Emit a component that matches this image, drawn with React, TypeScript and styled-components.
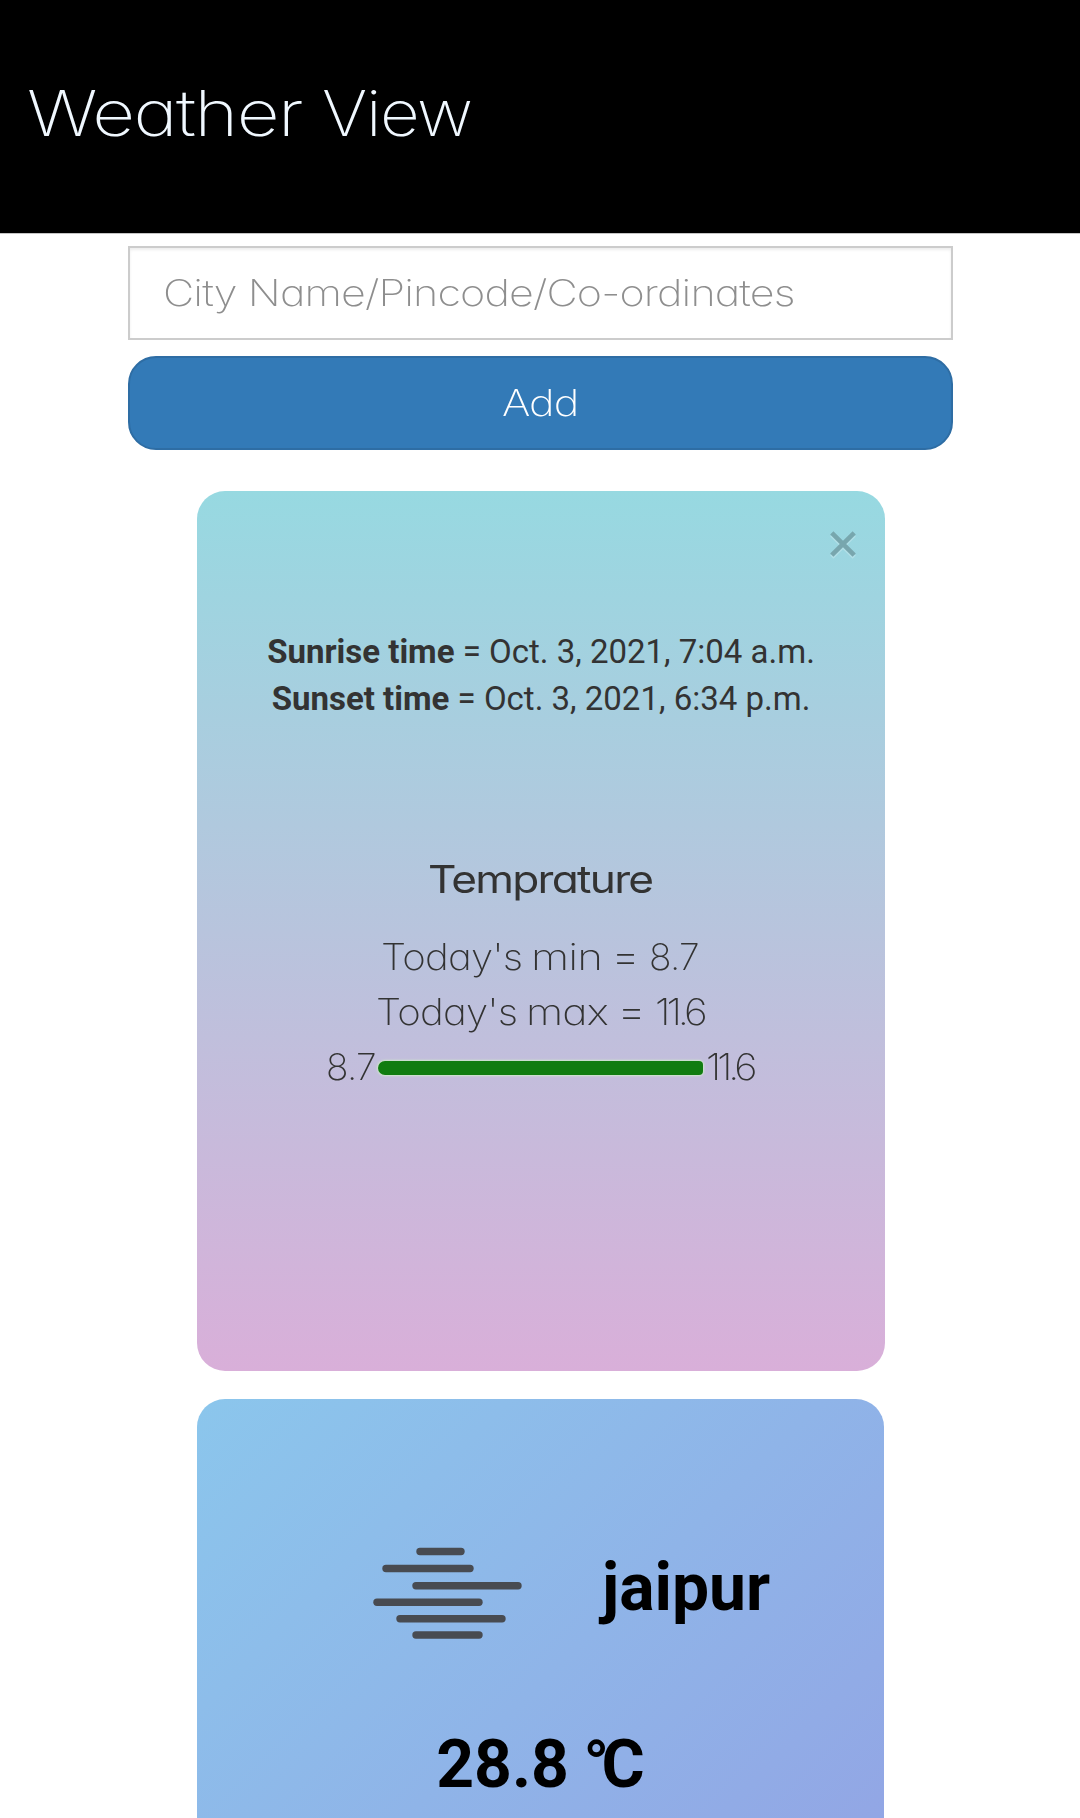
import React, { useLayoutEffect, useRef, useState } from 'react';
import styled, { createGlobalStyle } from 'styled-components';

const GlobalStyle = createGlobalStyle`
  * { box-sizing: border-box; }
  html, body { margin: 0; background: #fff; }
  body { font-family: Roboto, sans-serif; color: #333; overflow: hidden; }
`;

const Page = styled.div`
  display: flex;
  flex-direction: column;
  align-items: center;
  width: 1080px;
  height: 1818px;
  overflow: hidden;
  background: #fff;
`;

const Header = styled.header`
  flex: none;
  width: 100%;
  height: 234px;
  padding: 73px 0 0 27px;
  background: #000;
  border-bottom: 1px solid #c4c4c4;
`;

const WordBox = styled.span<{ $width: number }>`
  display: block;
  flex: none;
  width: ${p => p.$width}px;
  text-align: left;
  white-space: pre;
`;

const WordText = styled.span<{ $size: number; $weight: number; $track: number }>`
  display: inline-block;
  transform-origin: 0 50%;
  font-family: Inter, Roboto, sans-serif;
  font-feature-settings: 'cv11';
  font-size: ${p => p.$size}px;
  font-weight: ${p => p.$weight};
  letter-spacing: ${p => p.$track}em;
`;

type WordProps = { width: number; size?: number; weight?: number; track?: number; children: string };

/* A word set wide: its letters are stretched to fill the given width. */
function Word({ width, size = 36.5, weight = 200, track = -0.02, children }: WordProps) {
  const ref = useRef<HTMLSpanElement>(null);
  const [scale, setScale] = useState(1);
  useLayoutEffect(() => {
    if (ref.current) setScale(width / ref.current.offsetWidth);
  }, [width, size, weight, track, children]);
  return (
    <WordBox $width={width}>
      <WordText ref={ref} $size={size} $weight={weight} $track={track} style={{ transform: `scaleX(${scale})` }}>
        {children}
      </WordText>
    </WordBox>
  );
}

const Title = styled.h1`
  display: flex;
  gap: 20px;
  margin: 0;
  line-height: 80px;
  font-weight: 200;
  color: aliceblue;
`;

const Form = styled.form`
  flex: none;
  display: flex;
  flex-direction: column;
  gap: 16px;
  width: 825px;
  margin: 12px 0 41px 1px;
`;

const Field = styled.label`
  display: block;
  width: 100%;
  height: 94px;
  padding: 0 33px;
  border: 2px solid #ccc;
  overflow: hidden;
  box-shadow: inset 0 2px 3px rgba(0, 0, 0, 0.075);
  background: #fff;
`;

const CityInput = styled.input`
  display: block;
  width: 620px;
  height: 90px;
  padding: 0;
  border: 0;
  outline: none;
  background: transparent;
  transform: scaleX(1.18);
  transform-origin: 0 50%;
  font-family: Inter, Roboto, sans-serif;
  font-feature-settings: 'cv11';
  font-size: 36.5px;
  font-weight: 200;
  letter-spacing: -0.75px;
  &::placeholder { color: #8e8e8e; opacity: 1; }
`;

const AddButton = styled.button`
  display: flex;
  align-items: center;
  justify-content: center;
  width: 100%;
  height: 94px;
  padding: 0;
  border: 2px solid #2e6da4;
  border-radius: 28px;
  background: #337ab7;
  color: #fff;
`;

const Card = styled.section<{ $bg: string; $width: number }>`
  flex: none;
  align-self: flex-start;
  display: flex;
  flex-direction: column;
  align-items: center;
  width: ${p => p.$width}px;
  height: 880px;
  margin: 0 0 28px 197px;
  border-radius: 28px;
  background: ${p => p.$bg};
`;

const CloseButton = styled.button`
  align-self: flex-end;
  width: 26px;
  height: 26px;
  margin: 40px 29px 0 0;
  padding: 0;
  border: 0;
  background: none;
  opacity: 0.22;
  svg { display: block; overflow: visible; filter: drop-shadow(0 2px 0 #fff); }
`;

const SunTimes = styled.div`
  margin-top: 71px;
  font-size: 33px;
  line-height: 47px;
  text-align: center;
  white-space: nowrap;
`;

const Heading = styled.h3`
  margin: 130px 2px 0 0;
  height: 55px;
  line-height: 55px;
`;

const Readings = styled.div`
  margin-top: 23px;
  padding-right: 3px;
`;

const Reading = styled.div<{ $gap: number }>`
  display: flex;
  align-items: center;
  justify-content: center;
  gap: ${p => p.$gap}px;
  height: 55px;
  line-height: 55px;
  ${WordBox} { margin-top: 6px; }
`;

const Bar = styled.div`
  flex: none;
  width: 325px;
  height: 14px;
  border-radius: 7px 4px 4px 7px;
  background: #107c10;
  box-shadow: 0 0 2px 1px #cfe8cb;
`;

const CityRow = styled.div`
  display: flex;
  align-items: center;
  width: 100%;
  height: 100px;
  margin-top: 144px;
  padding-left: 176px;
`;

const CityName = styled.h2`
  margin: -10px 0 0 80px;
  color: #000;
  font-size: 66px;
  font-weight: 700;
  line-height: 72px;
`;

const Degrees = styled.div`
  margin-top: 84px;
  color: #000;
  font-size: 66px;
  font-weight: 700;
  line-height: 76px;
  white-space: pre;
  word-spacing: -2px;
`;

const Ring = styled.span`
  letter-spacing: -7.5px;
`;

const Haze = () => (
  <svg width="149" height="93" viewBox="0 0 149 93" stroke="#484b51" strokeWidth="7.4" strokeLinecap="round">
    {[
      [47, 88, 4.5],
      [13, 97, 21.5],
      [43, 145, 38.7],
      [4, 106, 55.3],
      [27, 129, 71.7],
      [43, 106, 88],
    ].map(([x1, x2, y]) => (
      <path key={y} d={`M${x1} ${y}H${x2}`} />
    ))}
  </svg>
);

export default function App() {
  return (
    <>
      <GlobalStyle />
      <Page>
        <Header>
          <Title>
            <Word width={275} size={63}>Weather</Word>
            <Word width={150} size={63}>View</Word>
          </Title>
        </Header>
        <Form onSubmit={e => e.preventDefault()}>
          <Field>
            <CityInput placeholder="City Name/Pincode/Co-ordinates" />
          </Field>
          <AddButton><Word width={77}>Add</Word></AddButton>
        </Form>
        <Card $bg="linear-gradient(180deg, #97d9e1 0%, #d9afd9 100%)" $width={688}>
          <CloseButton aria-label="Close">
            <svg width="26" height="26" viewBox="0 0 26 26" stroke="#000" strokeWidth="4.6">
              <path d="M1.8 1.8L24.2 24.2M24.2 1.8L1.8 24.2" />
            </svg>
          </CloseButton>
          <SunTimes>
            <div><b>Sunrise time</b> = Oct. 3, 2021, 7:04 a.m.</div>
            <div><b>Sunset time</b> = Oct. 3, 2021, 6:34 p.m.</div>
          </SunTimes>
          <Heading><Word width={224} size={38.5} weight={390} track={-0.04}>Temprature</Word></Heading>
          <Readings>
            <Reading $gap={9}>
              <Word width={141}>Today's</Word>
              <Word width={71}>min</Word>
              <Word width={29} size={42} track={0}>=</Word>
              <Word width={50}>8.7</Word>
            </Reading>
            <Reading $gap={9}>
              <Word width={141}>Today's</Word>
              <Word width={82}>max</Word>
              <Word width={29} size={42} track={0}>=</Word>
              <Word width={49} track={-0.1}>11.6</Word>
            </Reading>
            <Reading $gap={2.5}>
              <Word width={50}>8.7</Word>
              <Bar />
              <Word width={48} track={-0.1}>11.6</Word>
            </Reading>
          </Readings>
        </Card>
        <Card $bg="linear-gradient(135deg, #8bc6ec 0%, #9599e2 100%)" $width={687}>
          <CityRow>
            <Haze />
            <CityName>jaipur</CityName>
          </CityRow>
          <Degrees>28.8 <Ring>°</Ring>C</Degrees>
        </Card>
      </Page>
    </>
  );
}
